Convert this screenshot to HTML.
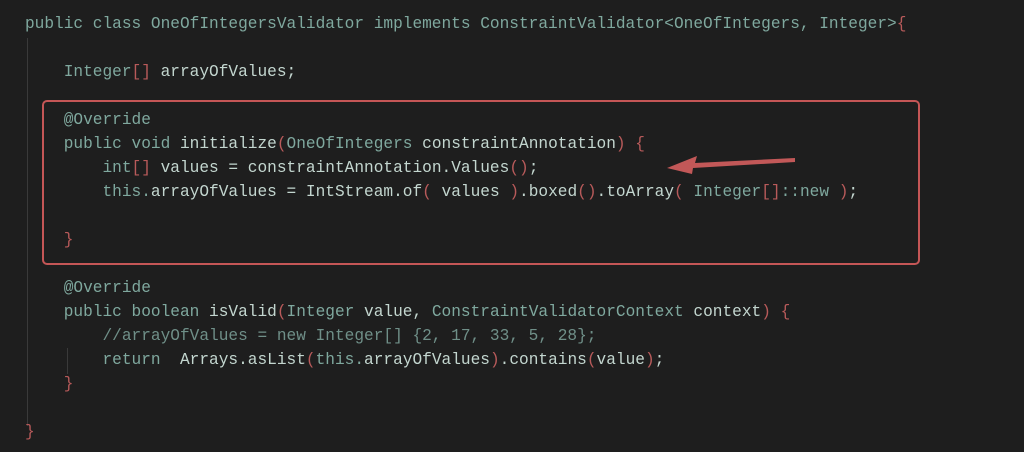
<!DOCTYPE html>
<html><head><meta charset="utf-8"><style>
html,body{margin:0;padding:0;background:#1e1e1e;width:1024px;height:452px;overflow:hidden;}
.l{position:absolute;left:25px;font-family:"Liberation Mono",monospace;font-size:16.15px;line-height:24px;color:#7fa89e;white-space:pre;}
.b{color:#c3d6cf;}
.p{color:#b85a5a;}
.c{color:#6f8f88;}
.g{position:absolute;width:1px;background:#3a3a3a;}
</style></head><body>
<div class="g" style="left:27px;top:38px;height:388px"></div>
<div class="g" style="left:67px;top:348px;height:26px"></div>
<div class="l" style="top:12px">public class OneOfIntegersValidator implements ConstraintValidator&lt;OneOfIntegers, Integer&gt;<span class="p">{</span></div>
<div class="l" style="top:60px">    Integer<span class="p">[]</span> <span class="b">arrayOfValues;</span></div>
<div class="l" style="top:108px">    @Override</div>
<div class="l" style="top:132px">    public void <span class="b">initialize</span><span class="p">(</span>OneOfIntegers <span class="b">constraintAnnotation</span><span class="p">)</span> <span class="p">{</span></div>
<div class="l" style="top:156px">        int<span class="p">[]</span> <span class="b">values = constraintAnnotation.Values</span><span class="p">()</span><span class="b">;</span></div>
<div class="l" style="top:180px">        this.<span class="b">arrayOfValues = IntStream.of</span><span class="p">(</span> <span class="b">values</span> <span class="p">)</span><span class="b">.boxed</span><span class="p">()</span><span class="b">.toArray</span><span class="p">(</span> Integer<span class="p">[]</span>::new <span class="p">)</span><span class="b">;</span></div>
<div class="l" style="top:228px">    <span class="p">}</span></div>
<div class="l" style="top:276px">    @Override</div>
<div class="l" style="top:300px">    public boolean <span class="b">isValid</span><span class="p">(</span>Integer <span class="b">value,</span> ConstraintValidatorContext <span class="b">context</span><span class="p">)</span> <span class="p">{</span></div>
<div class="l c" style="top:324px">        //arrayOfValues = new Integer[] {2, 17, 33, 5, 28};</div>
<div class="l" style="top:348px">        return  <span class="b">Arrays.asList</span><span class="p">(</span>this.<span class="b">arrayOfValues</span><span class="p">)</span><span class="b">.contains</span><span class="p">(</span><span class="b">value</span><span class="p">)</span><span class="b">;</span></div>
<div class="l" style="top:372px">    <span class="p">}</span></div>
<div class="l" style="top:420px"><span class="p">}</span></div>
<div style="position:absolute;left:42px;top:100px;width:874px;height:161px;border:2px solid #c45656;border-radius:5px;"></div>
<svg style="position:absolute;left:0;top:0" width="1024" height="452"><path d="M795,158 L695,163 L697,156 L667,168 L692,174 L693,168 L795,162 Z" fill="#c25858"/></svg>
</body></html>
